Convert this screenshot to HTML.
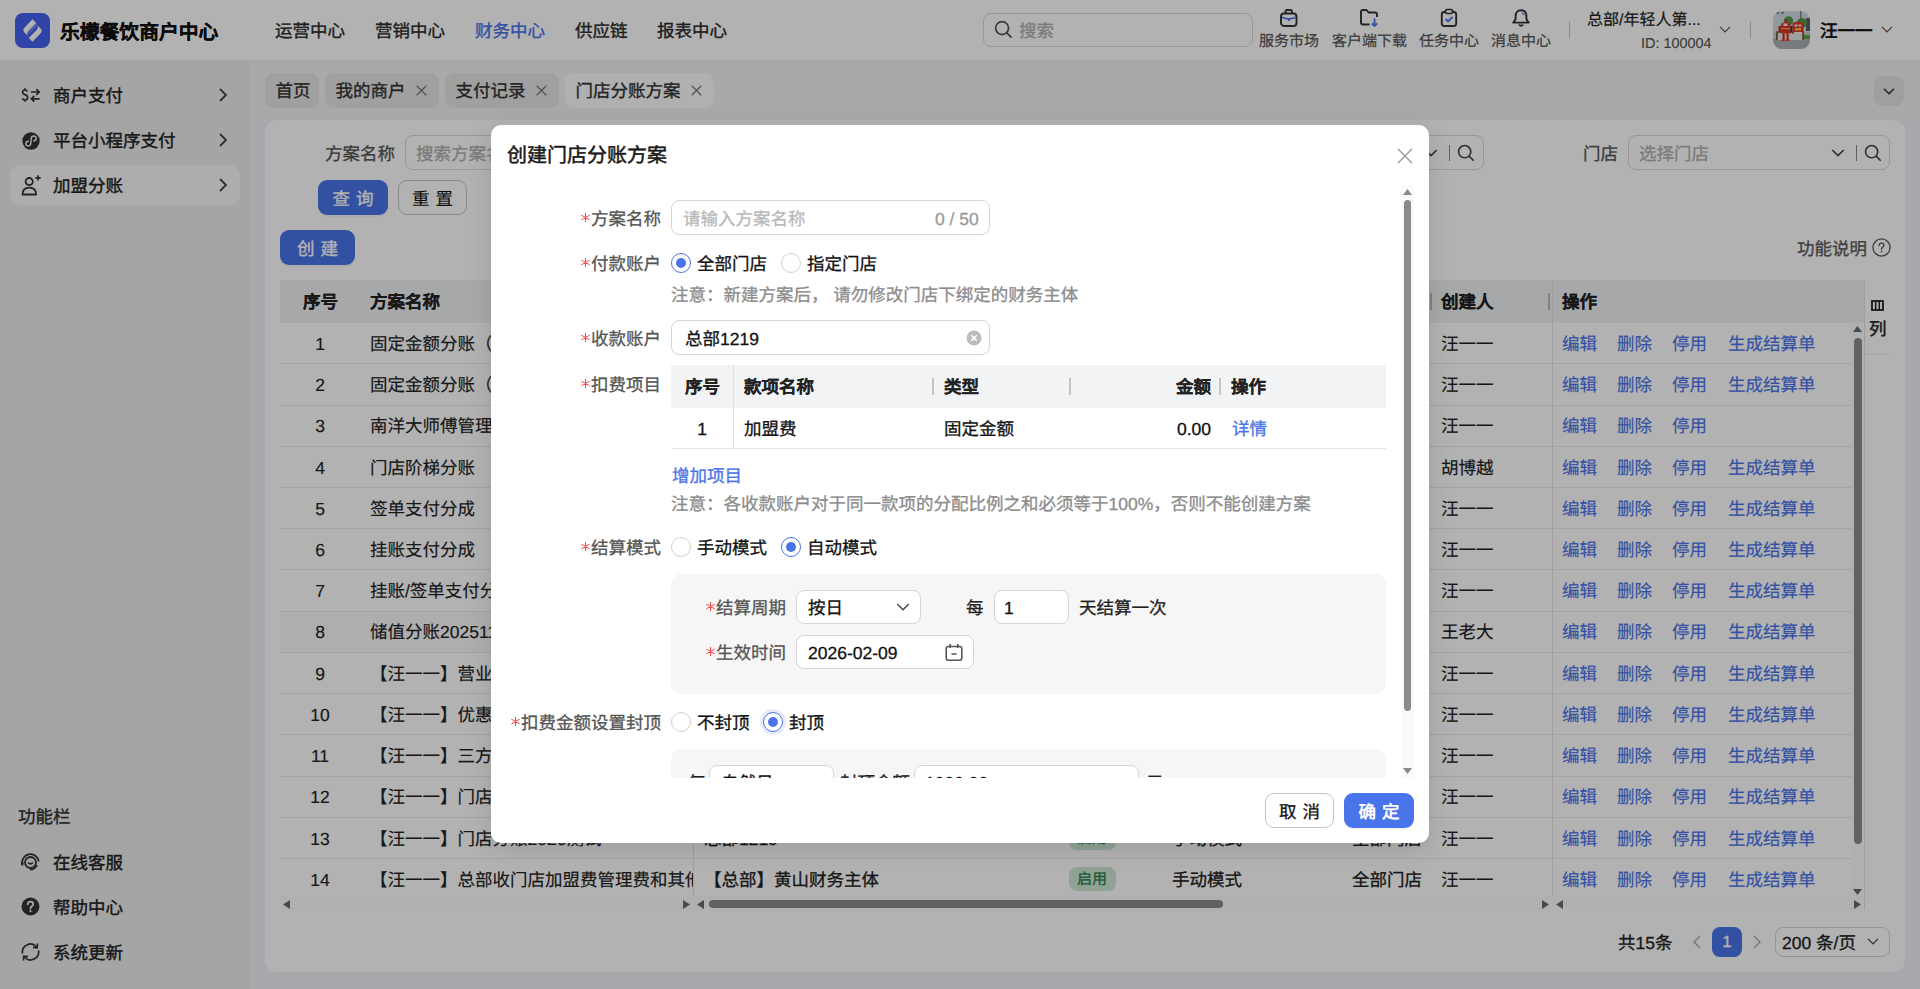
<!DOCTYPE html><html lang="zh-CN"><head><meta charset="utf-8"><title>创建门店分账方案</title><style>
*{box-sizing:border-box;margin:0;padding:0}
html,body{width:1920px;height:989px;overflow:hidden}
body{font-family:"Liberation Sans",sans-serif;color:#222;background:#f1f3f6;position:relative;font-size:17.5px;text-rendering:geometricPrecision;-webkit-text-stroke:0.3px}
.abs{position:absolute}
.t{position:absolute;white-space:nowrap;transform:translateY(1px)}
.b{font-weight:bold;-webkit-text-stroke:0.1px}
.mask{position:absolute;left:0;top:0;width:1920px;height:989px;background:rgba(0,0,0,.3)}
.inp{position:absolute;border:1px solid #d6d6d6;border-radius:8px;background:#fff;height:34px}
.radio{position:absolute;width:20px;height:20px;border:1px solid #d0d0d0;border-radius:50%;background:#fff}
.radio.on{border-color:#4a74ea}
.radio.on:after{content:"";position:absolute;left:4px;top:4px;width:10px;height:10px;border-radius:50%;background:#4a74ea}
.note{color:#8c8c8c}
.link{color:#4a74ea}
svg{-webkit-text-stroke:0}
</style></head><body>
<div class="abs" style="left:0;top:0;width:1920px;height:60px;background:#fff"></div>
<svg class="abs" style="left:15px;top:13px" width="35" height="35" viewBox="0 0 35 35">
<rect x="0" y="0" width="35" height="35" rx="8" fill="#4560f0"/>
<path d="M17.5 6.3 L21.3 10.1 L13.2 18.2 Q11.6 20 12.4 22.4 L9.4 19.6 Q7.2 17.3 9.6 14.6 Z" fill="#fff"/>
<path d="M17.5 28.7 L13.7 24.9 L21.8 16.8 Q23.4 15 22.6 12.6 L25.6 15.4 Q27.8 17.7 25.4 20.4 Z" fill="#fff"/>
<path d="M13.2 18.2 L21.3 10.1 L22.6 12.6 L12.4 22.4 Z" fill="#8a9cf3" opacity=".6"/>
</svg>
<div class="t" style="left:60px;top:1.5px;height:60px;line-height:60px;color:#111;font-size:19.8px;font-weight:bold;-webkit-text-stroke:0.2px">乐檬餐饮商户中心</div>
<div class="t" style="left:275px;top:0px;height:60px;line-height:60px;color:#2a2a2a;-webkit-text-stroke:0.35px">运营中心</div>
<div class="t" style="left:375px;top:0px;height:60px;line-height:60px;color:#2a2a2a;-webkit-text-stroke:0.35px">营销中心</div>
<div class="t" style="left:475px;top:0px;height:60px;line-height:60px;color:#4a74ea;-webkit-text-stroke:0.35px">财务中心</div>
<div class="t" style="left:575px;top:0px;height:60px;line-height:60px;color:#2a2a2a;-webkit-text-stroke:0.35px">供应链</div>
<div class="t" style="left:657px;top:0px;height:60px;line-height:60px;color:#2a2a2a;-webkit-text-stroke:0.35px">报表中心</div>
<div class="abs" style="left:983px;top:13px;width:270px;height:34px;border:1px solid #d9d9d9;border-radius:8px;background:#fff"></div>
<svg class="abs" style="left:994px;top:20px" width="19" height="19" viewBox="0 0 20 20"><circle cx="8.5" cy="8.5" r="6.8" fill="none" stroke="#555" stroke-width="1.8"/><path d="M13.5 13.5 L18 18" stroke="#555" stroke-width="1.8" stroke-linecap="round"/></svg>
<div class="t" style="left:1019px;top:13px;height:34px;line-height:34px;color:#b0b0b0;">搜索</div>
<div class="t" style="left:1259px;top:30.5px;height:20px;line-height:20px;color:#555;font-size:15px;-webkit-text-stroke:0.2px">服务市场</div>
<div class="t" style="left:1332px;top:30.5px;height:20px;line-height:20px;color:#555;font-size:15px;-webkit-text-stroke:0.2px">客户端下载</div>
<div class="t" style="left:1419px;top:30.5px;height:20px;line-height:20px;color:#555;font-size:15px;-webkit-text-stroke:0.2px">任务中心</div>
<div class="t" style="left:1491px;top:30.5px;height:20px;line-height:20px;color:#555;font-size:15px;-webkit-text-stroke:0.2px">消息中心</div>
<svg class="abs" style="left:1279px;top:8px" width="20" height="20" viewBox="0 0 20 20"><rect x="2" y="5.5" width="15.5" height="12.5" rx="3" fill="none" stroke="#333" stroke-width="1.9"/><path d="M6.5 5.5 V3.5 Q6.5 2 8 2 H11.5 Q13 2 13 3.5 V5.5" fill="none" stroke="#333" stroke-width="1.8"/><path d="M3 9.3 Q9.75 12.5 16.5 9.3" fill="none" stroke="#4a74ea" stroke-width="1.8"/><path d="M9.75 10.5 V13" stroke="#4a74ea" stroke-width="1.8"/></svg>
<svg class="abs" style="left:1359px;top:8px" width="22" height="20" viewBox="0 0 22 20"><path d="M10.5 16.5 H4 Q2 16.5 2 14.5 V4 Q2 2 4 2 H7.5 L9.5 4.5 H16 Q18 4.5 18 6.5 V9" fill="none" stroke="#333" stroke-width="1.9" stroke-linejoin="round"/><path d="M15.5 10.5 V18 M12.8 15.3 L15.5 18 L18.2 15.3" fill="none" stroke="#4a74ea" stroke-width="1.9"/></svg>
<svg class="abs" style="left:1440px;top:8px" width="18" height="20" viewBox="0 0 18 20"><rect x="1.8" y="4" width="14.4" height="14" rx="2.5" fill="none" stroke="#333" stroke-width="1.9"/><rect x="5.5" y="1.5" width="7" height="4" rx="1.5" fill="#fff" stroke="#333" stroke-width="1.7"/><path d="M5.5 11 L8 13.5 L12.5 9" fill="none" stroke="#4a74ea" stroke-width="1.8"/></svg>
<svg class="abs" style="left:1511px;top:8px" width="20" height="20" viewBox="0 0 20 20"><path d="M10 2.2 C6.2 2.2 4.6 5 4.6 8.2 V11.2 L2.3 14.6 H17.7 L15.4 11.2 V8.2 C15.4 5 13.8 2.2 10 2.2 Z" fill="none" stroke="#333" stroke-width="1.9" stroke-linejoin="round"/><path d="M8 16.5 Q10 19 12 16.5" fill="none" stroke="#333" stroke-width="1.8"/><path d="M10.8 4.8 Q12.6 5.5 13 7.2" fill="none" stroke="#4a74ea" stroke-width="1.3"/></svg>
<div class="abs" style="left:1569px;top:21px;width:1px;height:18px;background:#c8c8c8"></div>
<div class="t" style="left:1587px;top:10px;height:20px;line-height:20px;color:#222;font-size:16px;-webkit-text-stroke:0.2px">总部/年轻人第...</div>
<div class="t" style="left:1641px;top:32.5px;height:20px;line-height:20px;color:#555;font-size:14.4px;-webkit-text-stroke:0.1px">ID: 100004</div>
<svg class="abs" style="left:1719px;top:26px" width="12" height="7" viewBox="0 0 14 8.4"><path d="M1 1 L7 7 L13 1" fill="none" stroke="#555" stroke-width="1.5"/></svg>
<div class="abs" style="left:1750px;top:21px;width:1px;height:18px;background:#c8c8c8"></div>
<svg class="abs" style="left:1773px;top:11px" width="37" height="38" viewBox="0 0 37 38"><defs><clipPath id="av"><rect width="37" height="38" rx="9"/></clipPath></defs><g clip-path="url(#av)">
<rect width="37" height="38" fill="#cfdbe3"/>
<rect x="3" y="0" width="3" height="3" fill="#8a949a"/><rect x="8" y="1" width="3" height="2" fill="#8a949a"/><rect x="27" y="0" width="1.5" height="9" fill="#7b858b"/>
<rect x="33" y="7" width="4" height="13" fill="#5a6066"/>
<rect x="0" y="21" width="37" height="8" fill="#c6cdd1"/>
<circle cx="15.5" cy="9.8" r="4.6" fill="#4f9a45"/><circle cx="29" cy="12" r="5" fill="#4f9a45"/>
<rect x="31" y="24" width="6" height="4" fill="#54a646"/>
<rect x="0" y="28" width="37" height="10" fill="#a9b1b5"/>
<rect x="3" y="20.5" width="28" height="8.5" fill="#e6e6e2"/>
<rect x="3" y="20.5" width="1.8" height="8.5" fill="#7a5a38"/><rect x="29.2" y="20.5" width="1.8" height="8.5" fill="#7a5a38"/>
<rect x="3" y="20.5" width="28" height="1.5" fill="#8a6a45"/>
<path d="M8 13 Q12.5 9 17.5 13 L17.5 22.5 L8 22.5 Z" fill="#e0332a"/>
<rect x="10.5" y="12.5" width="4" height="2.5" fill="#f4f0e8"/>
<rect x="8" y="17" width="9.5" height="1.2" fill="#f0b030"/>
<rect x="12" y="8" width="2" height="4" fill="#d8302a"/>
<rect x="5.5" y="15" width="2.5" height="6" fill="#c62c25"/><rect x="17.5" y="15" width="2" height="6" fill="#3a2a2a"/>
<rect x="9.5" y="22.5" width="2.2" height="6.5" fill="#c62c25"/><rect x="13.5" y="22.5" width="2.2" height="6.5" fill="#c62c25"/>
<rect x="8.5" y="28.5" width="3.5" height="1.5" fill="#e8342a"/><rect x="13" y="28.5" width="3.5" height="1.5" fill="#e8342a"/>
<path d="M19.5 12 Q25 9 30.5 12 L30.5 23 L19.5 23 Z" fill="#d8392e"/>
<rect x="21.5" y="13.5" width="3" height="2" fill="#f6e6c8"/><rect x="25.5" y="13.5" width="3" height="2" fill="#f6e6c8"/>
<rect x="22" y="17" width="6" height="2.5" fill="#f2b63a"/>
<rect x="21" y="21" width="8" height="2" fill="#f0eee8"/>
</g></svg>
<div class="t" style="left:1820px;top:0px;height:60px;line-height:60px;color:#111;font-size:17.5px;font-weight:normal;-webkit-text-stroke:0.7px">汪一一</div>
<svg class="abs" style="left:1881px;top:26px" width="12" height="7" viewBox="0 0 14 8.4"><path d="M1 1 L7 7 L13 1" fill="none" stroke="#555" stroke-width="1.5"/></svg>
<div class="abs" style="left:0;top:60px;width:250px;height:929px;background:#ececec"></div>
<div class="abs" style="left:10px;top:165px;width:230px;height:40px;border-radius:10px;background:#f8f8f8"></div>
<div class="t" style="left:53px;top:75px;height:40px;line-height:40px;color:#222;-webkit-text-stroke:0.4px">商户支付</div>
<svg class="abs" style="left:218px;top:88px" width="10" height="14" viewBox="0 0 10 14"><path d="M2 1 L8 7 L2 13" fill="none" stroke="#444" stroke-width="1.8"/></svg>
<div class="t" style="left:53px;top:120px;height:40px;line-height:40px;color:#222;-webkit-text-stroke:0.4px">平台小程序支付</div>
<svg class="abs" style="left:218px;top:133px" width="10" height="14" viewBox="0 0 10 14"><path d="M2 1 L8 7 L2 13" fill="none" stroke="#444" stroke-width="1.8"/></svg>
<div class="t" style="left:53px;top:165px;height:40px;line-height:40px;color:#222;-webkit-text-stroke:0.4px">加盟分账</div>
<svg class="abs" style="left:218px;top:178px" width="10" height="14" viewBox="0 0 10 14"><path d="M2 1 L8 7 L2 13" fill="none" stroke="#444" stroke-width="1.8"/></svg>
<svg class="abs" style="left:21px;top:88px" width="20" height="15" viewBox="0 0 20 15"><path d="M6.3 3.6 Q5.8 2 4 2 Q1.6 2 1.6 4.1 Q1.6 5.9 4 6.6 Q6.6 7.3 6.6 9.6 Q6.6 12 4 12 Q1.9 12 1.3 10.4 M4 0.2 V2 M4 12 V13.8" fill="none" stroke="#333" stroke-width="1.7"/><path d="M10 4 H18.2 M15.3 1.1 L18.2 4 L15.3 6.9 M18.6 10.8 H10.4 M13.3 7.9 L10.4 10.8 L13.3 13.7" fill="none" stroke="#333" stroke-width="1.7"/></svg>
<svg class="abs" style="left:21.5px;top:131.5px" width="18" height="18" viewBox="0 0 18 18"><circle cx="9" cy="9" r="8.7" fill="#333"/><path d="M6.3 9.2 A2.4 2.4 0 1 0 8.7 11.6 L9.3 6.4 A2.4 2.4 0 1 1 11.7 8.8" fill="none" stroke="#e8e8e8" stroke-width="1.5" stroke-linecap="round"/></svg>
<svg class="abs" style="left:21px;top:174px" width="22" height="22" viewBox="0 0 22 22"><circle cx="8.2" cy="7.6" r="3.6" fill="none" stroke="#333" stroke-width="1.8"/><path d="M1.5 20.5 Q1.5 13.6 8.3 13.6 Q15.1 13.6 15.1 20.5 Z" fill="none" stroke="#333" stroke-width="1.8" stroke-linejoin="round"/><path d="M17 1.2 V6.6 M14.3 3.9 H19.7" stroke="#333" stroke-width="1.6"/></svg>
<div class="t" style="left:18px;top:806px;height:20px;line-height:20px;color:#333;-webkit-text-stroke:0.4px">功能栏</div>
<div class="t" style="left:53px;top:842px;height:40px;line-height:40px;color:#222;-webkit-text-stroke:0.4px">在线客服</div>
<div class="t" style="left:53px;top:887px;height:40px;line-height:40px;color:#222;-webkit-text-stroke:0.4px">帮助中心</div>
<div class="t" style="left:53px;top:932px;height:40px;line-height:40px;color:#222;-webkit-text-stroke:0.4px">系统更新</div>
<svg class="abs" style="left:20px;top:852px" width="21" height="20" viewBox="0 0 21 20"><path d="M2.2 11.5 A8.3 8.3 0 0 1 18.8 9.5" fill="none" stroke="#333" stroke-width="1.8"/><circle cx="10.5" cy="10.5" r="5.5" fill="none" stroke="#333" stroke-width="1.8"/><path d="M8 10.5 Q10.5 13.3 13 10.5" fill="none" stroke="#333" stroke-width="1.6"/><path d="M17 13 Q15.5 17.5 10 17.8" fill="none" stroke="#333" stroke-width="1.6"/><rect x="1" y="9.5" width="2.5" height="4" rx="1" fill="#333"/></svg>
<svg class="abs" style="left:21px;top:897px" width="19" height="19" viewBox="0 0 19 19"><circle cx="9.5" cy="9.5" r="9" fill="#333"/><path d="M6.8 7.3 Q6.8 4.6 9.5 4.6 Q12.2 4.6 12.2 7 Q12.2 8.6 10.6 9.4 Q9.5 10 9.5 11.5" fill="none" stroke="#ececec" stroke-width="1.8" stroke-linecap="round"/><circle cx="9.5" cy="14.2" r="1.1" fill="#ececec"/></svg>
<svg class="abs" style="left:20px;top:942px" width="21" height="20" viewBox="0 0 21 20"><path d="M2.5 11.5 A8 8 0 0 1 16.5 5" fill="none" stroke="#333" stroke-width="1.7"/><path d="M18.5 8.5 A8 8 0 0 1 4.5 15" fill="none" stroke="#333" stroke-width="1.7"/><path d="M17.5 1.5 L17.2 5.8 L13 5.3" fill="none" stroke="#333" stroke-width="1.7"/><path d="M3.5 18.5 L3.8 14.2 L8 14.7" fill="none" stroke="#333" stroke-width="1.7"/></svg>
<div class="abs" style="left:250px;top:60px;width:1670px;height:60px;background:#f2f2f2"></div>
<div class="abs" style="left:265px;top:73px;width:54px;height:35px;border-radius:9px;background:#e5e5e5"></div>
<div class="t" style="left:275.5px;top:73px;height:35px;line-height:35px;color:#333;-webkit-text-stroke:0.35px">首页</div>
<div class="abs" style="left:325px;top:73px;width:114px;height:35px;border-radius:9px;background:#e5e5e5"></div>
<div class="t" style="left:335.5px;top:73px;height:35px;line-height:35px;color:#333;-webkit-text-stroke:0.35px">我的商户</div>
<svg class="abs" style="left:415.5px;top:85px" width="11" height="11" viewBox="0 0 11 11"><path d="M0.7 0.7 L10.3 10.3 M10.3 0.7 L0.7 10.3" stroke="#777" stroke-width="1.3"/></svg>
<div class="abs" style="left:445px;top:73px;width:114px;height:35px;border-radius:9px;background:#e5e5e5"></div>
<div class="t" style="left:455.5px;top:73px;height:35px;line-height:35px;color:#333;-webkit-text-stroke:0.35px">支付记录</div>
<svg class="abs" style="left:535.5px;top:85px" width="11" height="11" viewBox="0 0 11 11"><path d="M0.7 0.7 L10.3 10.3 M10.3 0.7 L0.7 10.3" stroke="#777" stroke-width="1.3"/></svg>
<div class="abs" style="left:565px;top:73px;width:149px;height:35px;border-radius:9px;background:#fcfcfc"></div>
<div class="t" style="left:575.5px;top:73px;height:35px;line-height:35px;color:#333;-webkit-text-stroke:0.35px">门店分账方案</div>
<svg class="abs" style="left:690.5px;top:85px" width="11" height="11" viewBox="0 0 11 11"><path d="M0.7 0.7 L10.3 10.3 M10.3 0.7 L0.7 10.3" stroke="#777" stroke-width="1.3"/></svg>
<div class="abs" style="left:1874px;top:76px;width:30px;height:30px;border-radius:8px;background:#e4e4e4"></div>
<svg class="abs" style="left:1883px;top:88px" width="12" height="7" viewBox="0 0 14 8.4"><path d="M1 1 L7 7 L13 1" fill="none" stroke="#333" stroke-width="1.7"/></svg>
<div class="abs" style="left:265px;top:120px;width:1640px;height:852px;border-radius:12px;background:#fff"></div>
<div class="t" style="left:325px;top:136px;height:34px;line-height:34px;color:#555;">方案名称</div>
<div class="abs" style="left:405px;top:135px;width:300px;height:35px;border:1px solid #d9d9d9;border-radius:8px"></div>
<div class="t" style="left:416px;top:136px;height:34px;line-height:34px;color:#b0b0b0;">搜索方案名称</div>
<div class="t" style="left:1583px;top:136px;height:34px;line-height:34px;color:#555;">门店</div>
<div class="abs" style="left:1628px;top:135px;width:262px;height:35px;border:1px solid #d9d9d9;border-radius:8px"></div>
<div class="t" style="left:1639px;top:136px;height:34px;line-height:34px;color:#b0b0b0;">选择门店</div>
<svg class="abs" style="left:1831px;top:149px" width="14" height="8" viewBox="0 0 14 8.4"><path d="M1 1 L7 7 L13 1" fill="none" stroke="#444" stroke-width="1.7"/></svg>
<div class="abs" style="left:1856px;top:145px;width:1px;height:16px;background:#8a8a8a"></div>
<svg class="abs" style="left:1864px;top:144px" width="18" height="18" viewBox="0 0 20 20"><circle cx="8.5" cy="8.5" r="6.8" fill="none" stroke="#444" stroke-width="1.8"/><path d="M13.5 13.5 L18 18" stroke="#444" stroke-width="1.8" stroke-linecap="round"/></svg>
<div class="abs" style="left:1300px;top:135px;width:184px;height:35px;border:1px solid #d9d9d9;border-radius:8px"></div>
<svg class="abs" style="left:1424px;top:149px" width="14" height="8" viewBox="0 0 14 8.4"><path d="M1 1 L7 7 L13 1" fill="none" stroke="#444" stroke-width="1.7"/></svg>
<div class="abs" style="left:1449px;top:145px;width:1px;height:16px;background:#8a8a8a"></div>
<svg class="abs" style="left:1457px;top:144px" width="18" height="18" viewBox="0 0 20 20"><circle cx="8.5" cy="8.5" r="6.8" fill="none" stroke="#444" stroke-width="1.8"/><path d="M13.5 13.5 L18 18" stroke="#444" stroke-width="1.8" stroke-linecap="round"/></svg>
<div class="abs" style="left:318px;top:180px;width:70px;height:35px;border-radius:9px;background:#4a74ea;box-shadow:0 2px 0 rgba(0,0,0,.04)"><div class="t" style="left:0;top:1px;width:70px;text-align:center;height:35px;line-height:35px;color:#fff;font-weight:normal;-webkit-text-stroke:0.35px"><span style="letter-spacing:6px">查</span>询</div></div>
<div class="abs" style="left:398px;top:180px;width:69px;height:35px;border-radius:9px;background:#fff;border:1px solid #c4c4c4"><div class="t" style="left:-1px;top:0px;width:69px;text-align:center;height:35px;line-height:35px;color:#111;font-weight:normal;-webkit-text-stroke:0.05px"><span style="letter-spacing:6px">重</span>置</div></div>
<div class="abs" style="left:280px;top:230px;width:75px;height:35px;border-radius:9px;background:#4a74ea;box-shadow:0 2px 0 rgba(0,0,0,.04)"><div class="t" style="left:0;top:1px;width:75px;text-align:center;height:35px;line-height:35px;color:#fff;font-weight:normal;-webkit-text-stroke:0.35px"><span style="letter-spacing:6px">创</span>建</div></div>
<div class="t" style="left:1797px;top:238px;height:20px;line-height:20px;color:#5a5a5a;">功能说明</div>
<svg class="abs" style="left:1872px;top:238px" width="19" height="19" viewBox="0 0 19 19"><circle cx="9.5" cy="9.5" r="8.6" fill="none" stroke="#555" stroke-width="1.3"/><path d="M7.2 7.6 Q7.2 5.2 9.5 5.2 Q11.8 5.2 11.8 7.3 Q11.8 8.7 10.5 9.3 Q9.5 9.8 9.5 11.3" fill="none" stroke="#555" stroke-width="1.3" stroke-linecap="round"/><circle cx="9.5" cy="13.6" r=".9" fill="#555"/></svg>
<div class="abs" style="left:280px;top:280px;width:1584px;height:43px;background:#f0f1f4"></div>
<div class="abs" style="left:1864px;top:280px;width:25px;height:75px;background:#fff;border-bottom:1px solid #eee"></div>
<div class="t" style="left:303px;top:280px;height:43px;line-height:43px;color:#222;font-weight:bold;-webkit-text-stroke:0.1px">序号</div>
<div class="t" style="left:370px;top:280px;height:43px;line-height:43px;color:#222;font-weight:bold;-webkit-text-stroke:0.1px">方案名称</div>
<div class="t" style="left:1441px;top:280px;height:43px;line-height:43px;color:#222;font-weight:bold;-webkit-text-stroke:0.1px">创建人</div>
<div class="t" style="left:1562px;top:280px;height:43px;line-height:43px;color:#222;font-weight:bold;-webkit-text-stroke:0.1px">操作</div>
<div class="abs" style="left:1430px;top:293px;width:1.5px;height:17px;background:#bbb"></div>
<div class="abs" style="left:1548px;top:293px;width:1.5px;height:17px;background:#bbb"></div>
<div class="abs" style="left:1552px;top:280px;width:1px;height:630px;background:#e3e3e3"></div>
<div class="abs" style="left:1864px;top:280px;width:1px;height:630px;background:#e3e3e3"></div>
<svg class="abs" style="left:1871px;top:300px" width="13" height="11" viewBox="0 0 13 11"><rect x="1" y="1" width="11" height="9" fill="none" stroke="#222" stroke-width="1.8"/><path d="M4.7 1 V10 M8.3 1 V10" stroke="#222" stroke-width="1.5"/></svg>
<div class="t" style="left:1869px;top:318px;height:20px;line-height:20px;color:#222;-webkit-text-stroke:0.45px">列</div>
<div class="abs" style="left:280px;top:323.10px;width:1572px;height:41.23px;border-bottom:1px solid #e9e9e9"></div>
<div class="t" style="left:280px;width:80px;text-align:center;top:322.90px;height:41.23px;line-height:41.23px;color:#222;-webkit-text-stroke:0.15px">1</div>
<div class="t" style="left:370px;width:323px;overflow:hidden;top:322.90px;height:41.23px;line-height:41.23px;color:#222;-webkit-text-stroke:0.15px">固定金额分账（</div>
<div class="t" style="left:1441px;top:322.90px;height:41.23px;line-height:41.23px;color:#222;-webkit-text-stroke:0.15px">汪一一</div>
<div class="t" style="left:1562px;top:322.90px;height:41.23px;line-height:41.23px;color:#4a74ea;-webkit-text-stroke:0.15px">编辑</div>
<div class="t" style="left:1617px;top:322.90px;height:41.23px;line-height:41.23px;color:#4a74ea;-webkit-text-stroke:0.15px">删除</div>
<div class="t" style="left:1672px;top:322.90px;height:41.23px;line-height:41.23px;color:#4a74ea;-webkit-text-stroke:0.15px">停用</div>
<div class="t" style="left:1728px;top:322.90px;height:41.23px;line-height:41.23px;color:#4a74ea;-webkit-text-stroke:0.15px">生成结算单</div>
<div class="abs" style="left:280px;top:364.33px;width:1572px;height:41.23px;border-bottom:1px solid #e9e9e9"></div>
<div class="t" style="left:280px;width:80px;text-align:center;top:364.13px;height:41.23px;line-height:41.23px;color:#222;-webkit-text-stroke:0.15px">2</div>
<div class="t" style="left:370px;width:323px;overflow:hidden;top:364.13px;height:41.23px;line-height:41.23px;color:#222;-webkit-text-stroke:0.15px">固定金额分账（</div>
<div class="t" style="left:1441px;top:364.13px;height:41.23px;line-height:41.23px;color:#222;-webkit-text-stroke:0.15px">汪一一</div>
<div class="t" style="left:1562px;top:364.13px;height:41.23px;line-height:41.23px;color:#4a74ea;-webkit-text-stroke:0.15px">编辑</div>
<div class="t" style="left:1617px;top:364.13px;height:41.23px;line-height:41.23px;color:#4a74ea;-webkit-text-stroke:0.15px">删除</div>
<div class="t" style="left:1672px;top:364.13px;height:41.23px;line-height:41.23px;color:#4a74ea;-webkit-text-stroke:0.15px">停用</div>
<div class="t" style="left:1728px;top:364.13px;height:41.23px;line-height:41.23px;color:#4a74ea;-webkit-text-stroke:0.15px">生成结算单</div>
<div class="abs" style="left:280px;top:405.55px;width:1572px;height:41.23px;border-bottom:1px solid #e9e9e9"></div>
<div class="t" style="left:280px;width:80px;text-align:center;top:405.35px;height:41.23px;line-height:41.23px;color:#222;-webkit-text-stroke:0.15px">3</div>
<div class="t" style="left:370px;width:323px;overflow:hidden;top:405.35px;height:41.23px;line-height:41.23px;color:#222;-webkit-text-stroke:0.15px">南洋大师傅管理</div>
<div class="t" style="left:1441px;top:405.35px;height:41.23px;line-height:41.23px;color:#222;-webkit-text-stroke:0.15px">汪一一</div>
<div class="t" style="left:1562px;top:405.35px;height:41.23px;line-height:41.23px;color:#4a74ea;-webkit-text-stroke:0.15px">编辑</div>
<div class="t" style="left:1617px;top:405.35px;height:41.23px;line-height:41.23px;color:#4a74ea;-webkit-text-stroke:0.15px">删除</div>
<div class="t" style="left:1672px;top:405.35px;height:41.23px;line-height:41.23px;color:#4a74ea;-webkit-text-stroke:0.15px">停用</div>
<div class="abs" style="left:280px;top:446.78px;width:1572px;height:41.23px;border-bottom:1px solid #e9e9e9"></div>
<div class="t" style="left:280px;width:80px;text-align:center;top:446.58px;height:41.23px;line-height:41.23px;color:#222;-webkit-text-stroke:0.15px">4</div>
<div class="t" style="left:370px;width:323px;overflow:hidden;top:446.58px;height:41.23px;line-height:41.23px;color:#222;-webkit-text-stroke:0.15px">门店阶梯分账</div>
<div class="t" style="left:1441px;top:446.58px;height:41.23px;line-height:41.23px;color:#222;-webkit-text-stroke:0.15px">胡博越</div>
<div class="t" style="left:1562px;top:446.58px;height:41.23px;line-height:41.23px;color:#4a74ea;-webkit-text-stroke:0.15px">编辑</div>
<div class="t" style="left:1617px;top:446.58px;height:41.23px;line-height:41.23px;color:#4a74ea;-webkit-text-stroke:0.15px">删除</div>
<div class="t" style="left:1672px;top:446.58px;height:41.23px;line-height:41.23px;color:#4a74ea;-webkit-text-stroke:0.15px">停用</div>
<div class="t" style="left:1728px;top:446.58px;height:41.23px;line-height:41.23px;color:#4a74ea;-webkit-text-stroke:0.15px">生成结算单</div>
<div class="abs" style="left:280px;top:488.00px;width:1572px;height:41.23px;border-bottom:1px solid #e9e9e9"></div>
<div class="t" style="left:280px;width:80px;text-align:center;top:487.80px;height:41.23px;line-height:41.23px;color:#222;-webkit-text-stroke:0.15px">5</div>
<div class="t" style="left:370px;width:323px;overflow:hidden;top:487.80px;height:41.23px;line-height:41.23px;color:#222;-webkit-text-stroke:0.15px">签单支付分成</div>
<div class="t" style="left:1441px;top:487.80px;height:41.23px;line-height:41.23px;color:#222;-webkit-text-stroke:0.15px">汪一一</div>
<div class="t" style="left:1562px;top:487.80px;height:41.23px;line-height:41.23px;color:#4a74ea;-webkit-text-stroke:0.15px">编辑</div>
<div class="t" style="left:1617px;top:487.80px;height:41.23px;line-height:41.23px;color:#4a74ea;-webkit-text-stroke:0.15px">删除</div>
<div class="t" style="left:1672px;top:487.80px;height:41.23px;line-height:41.23px;color:#4a74ea;-webkit-text-stroke:0.15px">停用</div>
<div class="t" style="left:1728px;top:487.80px;height:41.23px;line-height:41.23px;color:#4a74ea;-webkit-text-stroke:0.15px">生成结算单</div>
<div class="abs" style="left:280px;top:529.23px;width:1572px;height:41.23px;border-bottom:1px solid #e9e9e9"></div>
<div class="t" style="left:280px;width:80px;text-align:center;top:529.02px;height:41.23px;line-height:41.23px;color:#222;-webkit-text-stroke:0.15px">6</div>
<div class="t" style="left:370px;width:323px;overflow:hidden;top:529.02px;height:41.23px;line-height:41.23px;color:#222;-webkit-text-stroke:0.15px">挂账支付分成</div>
<div class="t" style="left:1441px;top:529.02px;height:41.23px;line-height:41.23px;color:#222;-webkit-text-stroke:0.15px">汪一一</div>
<div class="t" style="left:1562px;top:529.02px;height:41.23px;line-height:41.23px;color:#4a74ea;-webkit-text-stroke:0.15px">编辑</div>
<div class="t" style="left:1617px;top:529.02px;height:41.23px;line-height:41.23px;color:#4a74ea;-webkit-text-stroke:0.15px">删除</div>
<div class="t" style="left:1672px;top:529.02px;height:41.23px;line-height:41.23px;color:#4a74ea;-webkit-text-stroke:0.15px">停用</div>
<div class="t" style="left:1728px;top:529.02px;height:41.23px;line-height:41.23px;color:#4a74ea;-webkit-text-stroke:0.15px">生成结算单</div>
<div class="abs" style="left:280px;top:570.45px;width:1572px;height:41.23px;border-bottom:1px solid #e9e9e9"></div>
<div class="t" style="left:280px;width:80px;text-align:center;top:570.25px;height:41.23px;line-height:41.23px;color:#222;-webkit-text-stroke:0.15px">7</div>
<div class="t" style="left:370px;width:323px;overflow:hidden;top:570.25px;height:41.23px;line-height:41.23px;color:#222;-webkit-text-stroke:0.15px">挂账/签单支付分</div>
<div class="t" style="left:1441px;top:570.25px;height:41.23px;line-height:41.23px;color:#222;-webkit-text-stroke:0.15px">汪一一</div>
<div class="t" style="left:1562px;top:570.25px;height:41.23px;line-height:41.23px;color:#4a74ea;-webkit-text-stroke:0.15px">编辑</div>
<div class="t" style="left:1617px;top:570.25px;height:41.23px;line-height:41.23px;color:#4a74ea;-webkit-text-stroke:0.15px">删除</div>
<div class="t" style="left:1672px;top:570.25px;height:41.23px;line-height:41.23px;color:#4a74ea;-webkit-text-stroke:0.15px">停用</div>
<div class="t" style="left:1728px;top:570.25px;height:41.23px;line-height:41.23px;color:#4a74ea;-webkit-text-stroke:0.15px">生成结算单</div>
<div class="abs" style="left:280px;top:611.67px;width:1572px;height:41.23px;border-bottom:1px solid #e9e9e9"></div>
<div class="abs" style="left:280px;top:611.67px;width:413px;height:40.23px;background:#f9f9f9"></div>
<div class="t" style="left:280px;width:80px;text-align:center;top:611.47px;height:41.23px;line-height:41.23px;color:#222;-webkit-text-stroke:0.15px">8</div>
<div class="t" style="left:370px;width:323px;overflow:hidden;top:611.47px;height:41.23px;line-height:41.23px;color:#222;-webkit-text-stroke:0.15px">储值分账202511</div>
<div class="t" style="left:1441px;top:611.47px;height:41.23px;line-height:41.23px;color:#222;-webkit-text-stroke:0.15px">王老大</div>
<div class="t" style="left:1562px;top:611.47px;height:41.23px;line-height:41.23px;color:#4a74ea;-webkit-text-stroke:0.15px">编辑</div>
<div class="t" style="left:1617px;top:611.47px;height:41.23px;line-height:41.23px;color:#4a74ea;-webkit-text-stroke:0.15px">删除</div>
<div class="t" style="left:1672px;top:611.47px;height:41.23px;line-height:41.23px;color:#4a74ea;-webkit-text-stroke:0.15px">停用</div>
<div class="t" style="left:1728px;top:611.47px;height:41.23px;line-height:41.23px;color:#4a74ea;-webkit-text-stroke:0.15px">生成结算单</div>
<div class="abs" style="left:280px;top:652.90px;width:1572px;height:41.23px;border-bottom:1px solid #e9e9e9"></div>
<div class="t" style="left:280px;width:80px;text-align:center;top:652.70px;height:41.23px;line-height:41.23px;color:#222;-webkit-text-stroke:0.15px">9</div>
<div class="t" style="left:370px;width:323px;overflow:hidden;top:652.70px;height:41.23px;line-height:41.23px;color:#222;-webkit-text-stroke:0.15px">【汪一一】营业</div>
<div class="t" style="left:1441px;top:652.70px;height:41.23px;line-height:41.23px;color:#222;-webkit-text-stroke:0.15px">汪一一</div>
<div class="t" style="left:1562px;top:652.70px;height:41.23px;line-height:41.23px;color:#4a74ea;-webkit-text-stroke:0.15px">编辑</div>
<div class="t" style="left:1617px;top:652.70px;height:41.23px;line-height:41.23px;color:#4a74ea;-webkit-text-stroke:0.15px">删除</div>
<div class="t" style="left:1672px;top:652.70px;height:41.23px;line-height:41.23px;color:#4a74ea;-webkit-text-stroke:0.15px">停用</div>
<div class="t" style="left:1728px;top:652.70px;height:41.23px;line-height:41.23px;color:#4a74ea;-webkit-text-stroke:0.15px">生成结算单</div>
<div class="abs" style="left:280px;top:694.12px;width:1572px;height:41.23px;border-bottom:1px solid #e9e9e9"></div>
<div class="t" style="left:280px;width:80px;text-align:center;top:693.92px;height:41.23px;line-height:41.23px;color:#222;-webkit-text-stroke:0.15px">10</div>
<div class="t" style="left:370px;width:323px;overflow:hidden;top:693.92px;height:41.23px;line-height:41.23px;color:#222;-webkit-text-stroke:0.15px">【汪一一】优惠</div>
<div class="t" style="left:1441px;top:693.92px;height:41.23px;line-height:41.23px;color:#222;-webkit-text-stroke:0.15px">汪一一</div>
<div class="t" style="left:1562px;top:693.92px;height:41.23px;line-height:41.23px;color:#4a74ea;-webkit-text-stroke:0.15px">编辑</div>
<div class="t" style="left:1617px;top:693.92px;height:41.23px;line-height:41.23px;color:#4a74ea;-webkit-text-stroke:0.15px">删除</div>
<div class="t" style="left:1672px;top:693.92px;height:41.23px;line-height:41.23px;color:#4a74ea;-webkit-text-stroke:0.15px">停用</div>
<div class="t" style="left:1728px;top:693.92px;height:41.23px;line-height:41.23px;color:#4a74ea;-webkit-text-stroke:0.15px">生成结算单</div>
<div class="abs" style="left:280px;top:735.35px;width:1572px;height:41.23px;border-bottom:1px solid #e9e9e9"></div>
<div class="t" style="left:280px;width:80px;text-align:center;top:735.15px;height:41.23px;line-height:41.23px;color:#222;-webkit-text-stroke:0.15px">11</div>
<div class="t" style="left:370px;width:323px;overflow:hidden;top:735.15px;height:41.23px;line-height:41.23px;color:#222;-webkit-text-stroke:0.15px">【汪一一】三方</div>
<div class="t" style="left:1441px;top:735.15px;height:41.23px;line-height:41.23px;color:#222;-webkit-text-stroke:0.15px">汪一一</div>
<div class="t" style="left:1562px;top:735.15px;height:41.23px;line-height:41.23px;color:#4a74ea;-webkit-text-stroke:0.15px">编辑</div>
<div class="t" style="left:1617px;top:735.15px;height:41.23px;line-height:41.23px;color:#4a74ea;-webkit-text-stroke:0.15px">删除</div>
<div class="t" style="left:1672px;top:735.15px;height:41.23px;line-height:41.23px;color:#4a74ea;-webkit-text-stroke:0.15px">停用</div>
<div class="t" style="left:1728px;top:735.15px;height:41.23px;line-height:41.23px;color:#4a74ea;-webkit-text-stroke:0.15px">生成结算单</div>
<div class="abs" style="left:280px;top:776.58px;width:1572px;height:41.23px;border-bottom:1px solid #e9e9e9"></div>
<div class="t" style="left:280px;width:80px;text-align:center;top:776.38px;height:41.23px;line-height:41.23px;color:#222;-webkit-text-stroke:0.15px">12</div>
<div class="t" style="left:370px;width:323px;overflow:hidden;top:776.38px;height:41.23px;line-height:41.23px;color:#222;-webkit-text-stroke:0.15px">【汪一一】门店</div>
<div class="t" style="left:1441px;top:776.38px;height:41.23px;line-height:41.23px;color:#222;-webkit-text-stroke:0.15px">汪一一</div>
<div class="t" style="left:1562px;top:776.38px;height:41.23px;line-height:41.23px;color:#4a74ea;-webkit-text-stroke:0.15px">编辑</div>
<div class="t" style="left:1617px;top:776.38px;height:41.23px;line-height:41.23px;color:#4a74ea;-webkit-text-stroke:0.15px">删除</div>
<div class="t" style="left:1672px;top:776.38px;height:41.23px;line-height:41.23px;color:#4a74ea;-webkit-text-stroke:0.15px">停用</div>
<div class="t" style="left:1728px;top:776.38px;height:41.23px;line-height:41.23px;color:#4a74ea;-webkit-text-stroke:0.15px">生成结算单</div>
<div class="abs" style="left:280px;top:817.80px;width:1572px;height:41.23px;border-bottom:1px solid #e9e9e9"></div>
<div class="t" style="left:280px;width:80px;text-align:center;top:817.60px;height:41.23px;line-height:41.23px;color:#222;-webkit-text-stroke:0.15px">13</div>
<div class="t" style="left:370px;width:323px;overflow:hidden;top:817.60px;height:41.23px;line-height:41.23px;color:#222;-webkit-text-stroke:0.15px">【汪一一】门店分账2026测试</div>
<div class="t" style="left:1441px;top:817.60px;height:41.23px;line-height:41.23px;color:#222;-webkit-text-stroke:0.15px">汪一一</div>
<div class="t" style="left:1562px;top:817.60px;height:41.23px;line-height:41.23px;color:#4a74ea;-webkit-text-stroke:0.15px">编辑</div>
<div class="t" style="left:1617px;top:817.60px;height:41.23px;line-height:41.23px;color:#4a74ea;-webkit-text-stroke:0.15px">删除</div>
<div class="t" style="left:1672px;top:817.60px;height:41.23px;line-height:41.23px;color:#4a74ea;-webkit-text-stroke:0.15px">停用</div>
<div class="t" style="left:1728px;top:817.60px;height:41.23px;line-height:41.23px;color:#4a74ea;-webkit-text-stroke:0.15px">生成结算单</div>
<div class="t" style="left:704px;top:817.60px;height:41.23px;line-height:41.23px;color:#222;">总部1219</div>
<div class="abs" style="left:1069px;top:825.60px;width:47px;height:24px;border-radius:8px;background:#cde9d6"></div>
<div class="t" style="left:1077px;top:825.60px;height:24px;line-height:24px;color:#2b7a47;font-size:15px">启用</div>
<div class="t" style="left:1172px;top:817.60px;height:41.23px;line-height:41.23px;color:#222;">手动模式</div>
<div class="t" style="left:1352px;top:817.60px;height:41.23px;line-height:41.23px;color:#222;">全部门店</div>
<div class="abs" style="left:280px;top:859.03px;width:1572px;height:41.23px;border-bottom:1px solid #e9e9e9"></div>
<div class="t" style="left:280px;width:80px;text-align:center;top:858.83px;height:41.23px;line-height:41.23px;color:#222;-webkit-text-stroke:0.15px">14</div>
<div class="t" style="left:370px;width:323px;overflow:hidden;top:858.83px;height:41.23px;line-height:41.23px;color:#222;-webkit-text-stroke:0.15px">【汪一一】总部收门店加盟费管理费和其他</div>
<div class="t" style="left:1441px;top:858.83px;height:41.23px;line-height:41.23px;color:#222;-webkit-text-stroke:0.15px">汪一一</div>
<div class="t" style="left:1562px;top:858.83px;height:41.23px;line-height:41.23px;color:#4a74ea;-webkit-text-stroke:0.15px">编辑</div>
<div class="t" style="left:1617px;top:858.83px;height:41.23px;line-height:41.23px;color:#4a74ea;-webkit-text-stroke:0.15px">删除</div>
<div class="t" style="left:1672px;top:858.83px;height:41.23px;line-height:41.23px;color:#4a74ea;-webkit-text-stroke:0.15px">停用</div>
<div class="t" style="left:1728px;top:858.83px;height:41.23px;line-height:41.23px;color:#4a74ea;-webkit-text-stroke:0.15px">生成结算单</div>
<div class="t" style="left:704px;top:858.83px;height:41.23px;line-height:41.23px;color:#222;">【总部】黄山财务主体</div>
<div class="abs" style="left:1069px;top:866.83px;width:47px;height:24px;border-radius:8px;background:#cde9d6"></div>
<div class="t" style="left:1077px;top:866.83px;height:24px;line-height:24px;color:#2b7a47;font-size:15px">启用</div>
<div class="t" style="left:1172px;top:858.83px;height:41.23px;line-height:41.23px;color:#222;">手动模式</div>
<div class="t" style="left:1352px;top:858.83px;height:41.23px;line-height:41.23px;color:#222;">全部门店</div>
<div class="abs" style="left:693px;top:323px;width:1px;height:587px;background:#e3e3e3"></div>
<div class="abs" style="left:280px;top:896px;width:1584px;height:14px;background:#fcfcfc"></div>
<svg class="abs" style="left:283px;top:899.5px" width="7" height="9"><polygon points="7,0 0,4.5 7,9" fill="#6a6a6a"/></svg>
<svg class="abs" style="left:683px;top:899.5px" width="7" height="9"><polygon points="0,0 7,4.5 0,9" fill="#6a6a6a"/></svg>
<svg class="abs" style="left:697px;top:899.5px" width="7" height="9"><polygon points="7,0 0,4.5 7,9" fill="#6a6a6a"/></svg>
<svg class="abs" style="left:1542px;top:899.5px" width="7" height="9"><polygon points="0,0 7,4.5 0,9" fill="#6a6a6a"/></svg>
<svg class="abs" style="left:1556px;top:899.5px" width="7" height="9"><polygon points="7,0 0,4.5 7,9" fill="#6a6a6a"/></svg>
<svg class="abs" style="left:1854px;top:899.5px" width="7" height="9"><polygon points="0,0 7,4.5 0,9" fill="#6a6a6a"/></svg>
<div class="abs" style="left:709px;top:900px;width:514px;height:7.5px;border-radius:4px;background:#8c8c8c"></div>
<div class="abs" style="left:1851px;top:323px;width:12px;height:573px;background:#fcfcfc"></div>
<svg class="abs" style="left:1853px;top:326px" width="9" height="6"><polygon points="0,6 4.5,0 9,6" fill="#6a6a6a"/></svg>
<svg class="abs" style="left:1853px;top:889px" width="9" height="6"><polygon points="0,0 4.5,6 9,0" fill="#6a6a6a"/></svg>
<div class="abs" style="left:1853.5px;top:338px;width:8px;height:506px;border-radius:4px;background:#8c8c8c"></div>
<div class="t" style="left:1618px;top:927px;height:30px;line-height:30px;color:#222;">共15条</div>
<svg class="abs" style="left:1692px;top:935px" width="10" height="14" viewBox="0 0 10 14"><path d="M8 1 L2 7 L8 13" fill="none" stroke="#aaa" stroke-width="1.4"/></svg>
<div class="abs" style="left:1712px;top:927px;width:30px;height:30px;border-radius:8px;background:#4a74ea"></div>
<div class="t" style="left:1712px;top:927px;width:30px;text-align:center;height:30px;line-height:30px;color:#fff;font-size:16px;-webkit-text-stroke:0.4px">1</div>
<svg class="abs" style="left:1752px;top:935px" width="10" height="14" viewBox="0 0 10 14"><path d="M2 1 L8 7 L2 13" fill="none" stroke="#aaa" stroke-width="1.4"/></svg>
<div class="abs" style="left:1775px;top:927px;width:115px;height:30px;border:1px solid #d4d4d4;border-radius:8px"></div>
<div class="t" style="left:1782px;top:927px;height:30px;line-height:30px;color:#222;">200 条/页</div>
<svg class="abs" style="left:1867px;top:938px" width="12" height="7" viewBox="0 0 14 8.4"><path d="M1 1 L7 7 L13 1" fill="none" stroke="#444" stroke-width="1.5"/></svg>
<div class="mask"></div>
<div class="abs" style="left:491px;top:125px;width:938px;height:718px;background:#fff;border-radius:10px;overflow:hidden;box-shadow:0 6px 24px rgba(0,0,0,.12)"><div class="t" style="left:16px;top:15px;height:30px;line-height:30px;color:#1a1a1a;font-size:20px;-webkit-text-stroke:0.5px">创建门店分账方案</div><svg class="abs" style="left:906px;top:23px" width="16" height="16" viewBox="0 0 16 16"><path d="M1 1 L15 15 M15 1 L1 15" stroke="#999" stroke-width="1.4"/></svg><div class="abs" style="left:0;top:60px;width:938px;height:593px;overflow:hidden"><div class="abs" style="left:0;top:-60px;width:938px;height:800px"><div class="t" style="left:100.0px;top:76px;height:34px;line-height:34px;color:#555">方案名称</div><svg class="abs" style="left:89.9px;top:87.9px" width="9" height="9" viewBox="-4.5 -4.5 9 9"><path d="M0 -4.2 V4.2 M-3.7 -2.1 L3.7 2.1 M-3.7 2.1 L3.7 -2.1" stroke="#f5484a" stroke-width="1.05" stroke-linecap="round"/></svg><div class="inp" style="left:180px;top:75px;width:319px;height:35px"></div><div class="t" style="left:192px;top:76px;height:34px;line-height:34px;color:#b8b8b8;">请输入方案名称</div><div class="t" style="left:444px;top:76px;height:34px;line-height:34px;color:#9a9a9a;">0 / 50</div><div class="t" style="left:100.0px;top:121px;height:34px;line-height:34px;color:#555">付款账户</div><svg class="abs" style="left:89.9px;top:132.9px" width="9" height="9" viewBox="-4.5 -4.5 9 9"><path d="M0 -4.2 V4.2 M-3.7 -2.1 L3.7 2.1 M-3.7 2.1 L3.7 -2.1" stroke="#f5484a" stroke-width="1.05" stroke-linecap="round"/></svg><div class="radio on" style="left:180px;top:128px"></div><div class="t" style="left:206px;top:121px;height:34px;line-height:34px;color:#111;">全部门店</div><div class="radio" style="left:290px;top:128px"></div><div class="t" style="left:316px;top:121px;height:34px;line-height:34px;color:#111;">指定门店</div><div class="t" style="left:180px;top:152px;height:34px;line-height:34px;color:#8c8c8c;">注意：新建方案后， 请勿修改门店下绑定的财务主体</div><div class="t" style="left:100.0px;top:196px;height:34px;line-height:34px;color:#555">收款账户</div><svg class="abs" style="left:89.9px;top:207.9px" width="9" height="9" viewBox="-4.5 -4.5 9 9"><path d="M0 -4.2 V4.2 M-3.7 -2.1 L3.7 2.1 M-3.7 2.1 L3.7 -2.1" stroke="#f5484a" stroke-width="1.05" stroke-linecap="round"/></svg><div class="inp" style="left:180px;top:195px;width:319px;height:35px"></div><div class="t" style="left:194px;top:196px;height:34px;line-height:34px;color:#111;">总部1219</div><svg class="abs" style="left:475px;top:205px" width="16" height="16" viewBox="0 0 16 16"><circle cx="8" cy="8" r="7.5" fill="#bcbcbc"/><path d="M5.3 5.3 L10.7 10.7 M10.7 5.3 L5.3 10.7" stroke="#fff" stroke-width="1.6"/></svg><div class="t" style="left:100.0px;top:242px;height:34px;line-height:34px;color:#555">扣费项目</div><svg class="abs" style="left:89.9px;top:253.9px" width="9" height="9" viewBox="-4.5 -4.5 9 9"><path d="M0 -4.2 V4.2 M-3.7 -2.1 L3.7 2.1 M-3.7 2.1 L3.7 -2.1" stroke="#f5484a" stroke-width="1.05" stroke-linecap="round"/></svg><div class="abs" style="left:180px;top:240px;width:715px;height:43px;background:#f2f3f5"></div><div class="abs" style="left:180px;top:283px;width:715px;height:41px;border-bottom:1px solid #e6e6e6"></div><div class="abs" style="left:242px;top:240px;width:1px;height:84px;background:#e0e0e0"></div><div class="t" style="left:194px;top:240px;height:43px;line-height:43px;color:#222;font-weight:bold;-webkit-text-stroke:0.1px">序号</div><div class="t" style="left:253px;top:240px;height:43px;line-height:43px;color:#222;font-weight:bold;-webkit-text-stroke:0.1px">款项名称</div><div class="t" style="left:453px;top:240px;height:43px;line-height:43px;color:#222;font-weight:bold;-webkit-text-stroke:0.1px">类型</div><div class="t" style="left:685px;top:240px;height:43px;line-height:43px;color:#222;font-weight:bold;-webkit-text-stroke:0.1px">金额</div><div class="t" style="left:740px;top:240px;height:43px;line-height:43px;color:#222;font-weight:bold;-webkit-text-stroke:0.1px">操作</div><div class="abs" style="left:441px;top:253px;width:1.5px;height:17px;background:#c4c4c4"></div><div class="abs" style="left:578px;top:253px;width:1.5px;height:17px;background:#c4c4c4"></div><div class="abs" style="left:728px;top:253px;width:1.5px;height:17px;background:#c4c4c4"></div><div class="t" style="left:180px;width:62px;text-align:center;top:283px;height:41px;line-height:41px;color:#111">1</div><div class="t" style="left:253px;top:283px;height:41px;line-height:41px;color:#111;">加盟费</div><div class="t" style="left:453px;top:283px;height:41px;line-height:41px;color:#111;">固定金额</div><div class="t" style="left:686px;top:283px;height:41px;line-height:41px;color:#111;">0.00</div><div class="t" style="left:741px;top:283px;height:41px;line-height:41px;color:#4a74ea;">详情</div><div class="t" style="left:181px;top:333px;height:34px;line-height:34px;color:#4a74ea;">增加项目</div><div class="t" style="left:180px;top:361px;height:34px;line-height:34px;color:#8c8c8c;">注意：各收款账户对于同一款项的分配比例之和必须等于100%，否则不能创建方案</div><div class="t" style="left:100.0px;top:405px;height:34px;line-height:34px;color:#555">结算模式</div><svg class="abs" style="left:89.9px;top:416.9px" width="9" height="9" viewBox="-4.5 -4.5 9 9"><path d="M0 -4.2 V4.2 M-3.7 -2.1 L3.7 2.1 M-3.7 2.1 L3.7 -2.1" stroke="#f5484a" stroke-width="1.05" stroke-linecap="round"/></svg><div class="radio" style="left:180px;top:412px"></div><div class="t" style="left:206px;top:405px;height:34px;line-height:34px;color:#111;">手动模式</div><div class="radio on" style="left:290px;top:412px"></div><div class="t" style="left:316px;top:405px;height:34px;line-height:34px;color:#111;">自动模式</div><div class="abs" style="left:180px;top:449px;width:715px;height:120px;border-radius:10px;background:#f6f6f6"></div><div class="t" style="left:225.0px;top:465px;height:34px;line-height:34px;color:#555">结算周期</div><svg class="abs" style="left:214.9px;top:476.9px" width="9" height="9" viewBox="-4.5 -4.5 9 9"><path d="M0 -4.2 V4.2 M-3.7 -2.1 L3.7 2.1 M-3.7 2.1 L3.7 -2.1" stroke="#f5484a" stroke-width="1.05" stroke-linecap="round"/></svg><div class="inp" style="left:305px;top:465px;width:125px"></div><div class="t" style="left:317px;top:465px;height:34px;line-height:34px;color:#111;">按日</div><svg class="abs" style="left:405px;top:478px" width="14" height="8" viewBox="0 0 14 8.4"><path d="M1 1 L7 7 L13 1" fill="none" stroke="#444" stroke-width="1.5"/></svg><div class="t" style="left:475px;top:465px;height:34px;line-height:34px;color:#222;">每</div><div class="inp" style="left:503px;top:465px;width:75px"></div><div class="t" style="left:513px;top:465px;height:34px;line-height:34px;color:#111;">1</div><div class="t" style="left:588px;top:465px;height:34px;line-height:34px;color:#222;">天结算一次</div><div class="t" style="left:225.0px;top:510px;height:34px;line-height:34px;color:#555">生效时间</div><svg class="abs" style="left:214.9px;top:521.9px" width="9" height="9" viewBox="-4.5 -4.5 9 9"><path d="M0 -4.2 V4.2 M-3.7 -2.1 L3.7 2.1 M-3.7 2.1 L3.7 -2.1" stroke="#f5484a" stroke-width="1.05" stroke-linecap="round"/></svg><div class="inp" style="left:305px;top:510px;width:178px"></div><div class="t" style="left:317px;top:510px;height:34px;line-height:34px;color:#111;">2026-02-09</div><svg class="abs" style="left:454px;top:518px" width="18" height="19" viewBox="0 0 18 19"><rect x="1.2" y="3.5" width="15.6" height="13.8" rx="2.2" fill="none" stroke="#555" stroke-width="1.6"/><path d="M5.2 1 V5 M12.8 1 V5 M6.5 11 H11.5" stroke="#555" stroke-width="1.6"/></svg><div class="t" style="left:30.0px;top:580px;height:34px;line-height:34px;color:#555">扣费金额设置封顶</div><svg class="abs" style="left:19.9px;top:591.9px" width="9" height="9" viewBox="-4.5 -4.5 9 9"><path d="M0 -4.2 V4.2 M-3.7 -2.1 L3.7 2.1 M-3.7 2.1 L3.7 -2.1" stroke="#f5484a" stroke-width="1.05" stroke-linecap="round"/></svg><div class="radio" style="left:180px;top:587px"></div><div class="t" style="left:206px;top:580px;height:34px;line-height:34px;color:#111;">不封顶</div><div class="abs" style="left:269px;top:584px;width:26px;height:26px;border-radius:50%;background:#e6ecfc"></div><div class="radio on" style="left:272px;top:587px"></div><div class="t" style="left:298px;top:580px;height:34px;line-height:34px;color:#111;">封顶</div><div class="abs" style="left:180px;top:624px;width:715px;height:119px;border-radius:10px;background:#f6f6f6"></div><div class="inp" style="left:218px;top:640px;width:125px"></div><div class="inp" style="left:423px;top:640px;width:225px"></div><div class="t" style="left:197px;top:640px;height:34px;line-height:34px;color:#222;">每</div><div class="t" style="left:230px;top:640px;height:34px;line-height:34px;color:#111;">自然日</div><div class="t" style="left:349px;top:640px;height:34px;line-height:34px;color:#222;">封顶金额</div><div class="t" style="left:434px;top:640px;height:34px;line-height:34px;color:#111;">1000.00</div><div class="t" style="left:655px;top:640px;height:34px;line-height:34px;color:#222;">元</div></div></div><div class="abs" style="left:910px;top:60px;width:13px;height:593px;background:#fafafa"></div><svg class="abs" style="left:912px;top:64px" width="9" height="6"><polygon points="0,6 4.5,0 9,6" fill="#8a8a8a"/></svg><div class="abs" style="left:913px;top:75px;width:7px;height:511px;border-radius:3.5px;background:#8a8a8a"></div><svg class="abs" style="left:912px;top:643px" width="9" height="6"><polygon points="0,0 4.5,6 9,0" fill="#8a8a8a"/></svg><div class="abs" style="left:774px;top:668px;width:69px;height:35px;border-radius:9px;background:#fff;border:1px solid #c4c4c4"><div class="t" style="left:-1px;top:0px;width:69px;text-align:center;height:35px;line-height:35px;color:#111;font-weight:normal;-webkit-text-stroke:0.3px"><span style="letter-spacing:6px">取</span>消</div></div><div class="abs" style="left:853px;top:668px;width:70px;height:35px;border-radius:9px;background:#4a74ea;box-shadow:0 2px 0 rgba(0,0,0,.04)"><div class="t" style="left:0;top:1px;width:70px;text-align:center;height:35px;line-height:35px;color:#fff;font-weight:normal;-webkit-text-stroke:0.6px"><span style="letter-spacing:6px">确</span>定</div></div></div>
</body></html>
